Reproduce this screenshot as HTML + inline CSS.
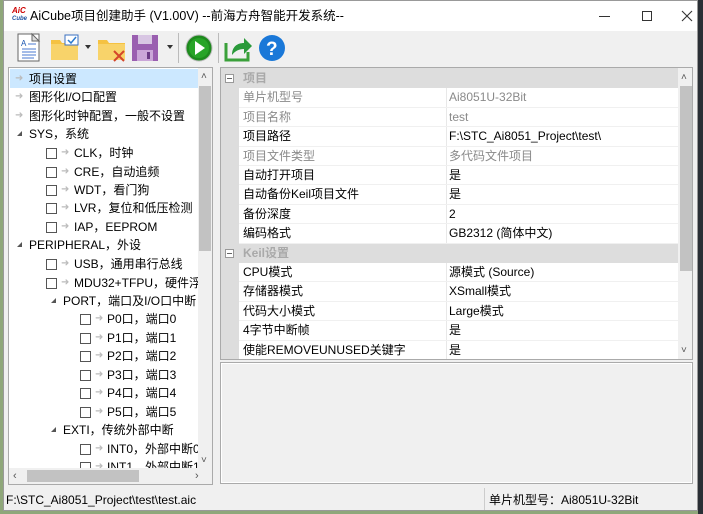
<!DOCTYPE html>
<html><head><meta charset="utf-8"><style>
*{margin:0;padding:0;box-sizing:border-box}
body{width:703px;height:514px;overflow:hidden;background:#8fa77a;font-family:"Liberation Sans","Noto Sans CJK SC",sans-serif;font-size:12px;color:#000;position:relative}
.a{position:absolute}
.win{left:3px;top:0;width:695px;height:511px;background:#f0f0f0;border:1px solid #999}
.t{position:absolute;white-space:nowrap;line-height:18px}
.cb{position:absolute;width:11px;height:11px;border:1px solid #555;background:#fff}
.ar{position:absolute;color:#bbb;font-size:10px;line-height:18px}
.tri{position:absolute;width:0;height:0;border-left:5px solid transparent;border-bottom:5px solid #555}
.row{position:absolute;left:18px;width:439px;height:19.4px;border-bottom:1px solid #f0f0f0;background:#fff}
.row span{position:absolute;top:1px;line-height:17px;white-space:nowrap}
.row .l{left:4px}.row .v{left:210px}
.row .d{position:absolute;left:207px;top:0;width:1px;height:100%;background:#e8e8e8}
.g{color:#8a8a8a}
.sec{position:absolute;left:0;width:457px;height:19.4px;background:#ddd}
.sec span{position:absolute;left:22px;top:1px;line-height:17px;color:#a9a9a9;font-weight:bold}
.sec i{position:absolute;left:4px;top:5px;width:9px;height:9px;border:1px solid #999;background:#fff}
.sec i:after{content:"";position:absolute;left:1px;top:3px;width:5px;height:1px;background:#666}
</style></head><body>
<div class="a" style="left:698px;top:0;width:5px;height:514px;background:#2a2f35"></div>
<div class="a win">
 <div class="a" style="left:0;top:0;width:693px;height:30px;background:#fff"></div>
 <div class="a" style="left:8px;top:6px;font-size:8px;line-height:7px;color:#c00;font-style:italic;font-weight:bold">AiC<br><span style="color:#1a4fa0;font-size:6px">Cube</span></div>
 <div class="t" style="left:26px;top:6px;font-size:12.5px">AiCube项目创建助手 (V1.00V) --前海方舟智能开发系统--</div>
 <div class="a" style="left:595px;top:15px;width:11px;height:1px;background:#333"></div>
 <div class="a" style="left:638px;top:10px;width:10px;height:10px;border:1px solid #333"></div>
 <svg class="a" style="left:677px;top:9px" width="12" height="12"><path d="M1 1L11 11M11 1L1 11" stroke="#333" stroke-width="1.1"/></svg>
 <!-- toolbar -->
 <svg class="a" style="left:0;top:30px" width="300" height="34">
  <rect x="14" y="3" width="21" height="27" fill="#fff" stroke="#666"/>
  <path d="M28 3 L35 10 L28 10 Z" fill="#ddd" stroke="#666"/>
  <text x="17" y="15" font-size="8" fill="#1a55b0" font-family="Liberation Sans">A</text>
  <path d="M18 18h14M18 21h14M18 24h14M18 27h12M24 13h8" stroke="#4a7ad0" stroke-width="1"/>
  <path d="M47 9h9l2 3h16v17h-27z" fill="#f5c242"/><rect x="47" y="13" width="27" height="16" fill="#f8d36a"/>
  <rect x="61" y="4" width="13" height="10" fill="#fff" stroke="#3a6fc0"/><path d="M64 9l3 3 5-6" stroke="#2a7ad0" fill="none" stroke-width="1.5"/>
  <path d="M81 14h6l-3 4z" fill="#333"/>
  <path d="M94 9h9l2 3h16v17h-27z" fill="#f5c242"/><rect x="94" y="13" width="27" height="16" fill="#f8d36a"/>
  <path d="M110 20l10 10M120 20l-10 10" stroke="#d4462a" stroke-width="2"/>
  <rect x="128" y="4" width="26" height="26" fill="#9a5fb0"/><rect x="134" y="4" width="14" height="9" fill="#d8c6e3"/><rect x="133" y="19" width="16" height="11" fill="#caa6d8"/><rect x="143" y="21" width="3" height="7" fill="#6a3a85"/>
  <path d="M163 14h6l-3 4z" fill="#333"/>
  <rect x="174" y="2" width="1" height="30" fill="#bbb"/>
  <circle cx="195" cy="17" r="13" fill="#1e8a1e" stroke="#bbb"/><circle cx="195" cy="17" r="10" fill="#28a428"/><path d="M191 10l10 7-10 7z" fill="#fff"/>
  <rect x="214" y="2" width="1" height="30" fill="#bbb"/>
  <path d="M222 12v17h22v-8" stroke="#3aa03a" stroke-width="3" fill="none"/>
  <path d="M228 24c0-8 5-12 12-12v-5l8 8-8 8v-5c-5 0-9 2-12 6z" fill="#2a9a3a"/>
  <circle cx="268" cy="17" r="13" fill="#1a78d8"/><text x="262" y="24" font-size="19" fill="#fff" font-weight="bold" font-family="Liberation Sans">?</text>
 </svg>
 <!-- tree -->
 <div class="a" style="left:4px;top:66px;width:205px;height:418px;background:#fff;border:1px solid #aaa;overflow:hidden">
  <div class="a" style="left:1px;top:1px;width:188px;height:19px;background:#cce8ff"></div>
  <div class="ar" style="left:6px;top:2px">➜</div><div class="t" style="left:20px;top:2px">项目设置</div>
  <div class="ar" style="left:6px;top:20px">➜</div><div class="t" style="left:20px;top:20px">图形化I/O口配置</div>
  <div class="ar" style="left:6px;top:39px">➜</div><div class="t" style="left:20px;top:39px">图形化时钟配置，一般不设置</div>
  <div class="tri" style="left:8px;top:63px"></div><div class="t" style="left:20px;top:57px">SYS，系统</div>
  <div class="cb" style="left:37px;top:80px"></div><div class="ar" style="left:52px;top:76px">➜</div><div class="t" style="left:65px;top:76px">CLK，时钟</div>
  <div class="cb" style="left:37px;top:99px"></div><div class="ar" style="left:52px;top:95px">➜</div><div class="t" style="left:65px;top:95px">CRE，自动追频</div>
  <div class="cb" style="left:37px;top:117px"></div><div class="ar" style="left:52px;top:113px">➜</div><div class="t" style="left:65px;top:113px">WDT，看门狗</div>
  <div class="cb" style="left:37px;top:135px"></div><div class="ar" style="left:52px;top:131px">➜</div><div class="t" style="left:65px;top:131px">LVR，复位和低压检测</div>
  <div class="cb" style="left:37px;top:154px"></div><div class="ar" style="left:52px;top:150px">➜</div><div class="t" style="left:65px;top:150px">IAP，EEPROM</div>
  <div class="tri" style="left:8px;top:174px"></div><div class="t" style="left:20px;top:168px">PERIPHERAL，外设</div>
  <div class="cb" style="left:37px;top:191px"></div><div class="ar" style="left:52px;top:187px">➜</div><div class="t" style="left:65px;top:187px">USB，通用串行总线</div>
  <div class="cb" style="left:37px;top:210px"></div><div class="ar" style="left:52px;top:206px">➜</div><div class="t" style="left:65px;top:206px">MDU32+TFPU，硬件浮点</div>
  <div class="tri" style="left:42px;top:230px"></div><div class="t" style="left:54px;top:224px">PORT，端口及I/O口中断</div>
  <div class="cb" style="left:71px;top:246px"></div><div class="ar" style="left:86px;top:242px">➜</div><div class="t" style="left:98px;top:242px">P0口，端口0</div>
  <div class="cb" style="left:71px;top:265px"></div><div class="ar" style="left:86px;top:261px">➜</div><div class="t" style="left:98px;top:261px">P1口，端口1</div>
  <div class="cb" style="left:71px;top:283px"></div><div class="ar" style="left:86px;top:279px">➜</div><div class="t" style="left:98px;top:279px">P2口，端口2</div>
  <div class="cb" style="left:71px;top:302px"></div><div class="ar" style="left:86px;top:298px">➜</div><div class="t" style="left:98px;top:298px">P3口，端口3</div>
  <div class="cb" style="left:71px;top:320px"></div><div class="ar" style="left:86px;top:316px">➜</div><div class="t" style="left:98px;top:316px">P4口，端口4</div>
  <div class="cb" style="left:71px;top:339px"></div><div class="ar" style="left:86px;top:335px">➜</div><div class="t" style="left:98px;top:335px">P5口，端口5</div>
  <div class="tri" style="left:42px;top:359px"></div><div class="t" style="left:54px;top:353px">EXTI，传统外部中断</div>
  <div class="cb" style="left:71px;top:376px"></div><div class="ar" style="left:86px;top:372px">➜</div><div class="t" style="left:98px;top:372px">INT0，外部中断0</div>
  <div class="cb" style="left:71px;top:394px"></div><div class="ar" style="left:86px;top:390px">➜</div><div class="t" style="left:98px;top:390px">INT1，外部中断1</div>
  <div class="a" style="left:189px;top:0;width:14px;height:400px;background:#f0f0f0"></div>
  <div class="a" style="left:190px;top:18px;width:12px;height:165px;background:#c2c2c2"></div>
  <div class="t" style="left:192px;top:0;font-size:10px;color:#555">˄</div>
  <div class="t" style="left:192px;top:384px;font-size:10px;color:#555">˅</div>
  <div class="a" style="left:0;top:400px;width:203px;height:16px;background:#f0f0f0"></div>
  <div class="a" style="left:18px;top:402px;width:112px;height:12px;background:#c2c2c2"></div>
  <div class="t" style="left:4px;top:399px;font-size:11px;color:#555">‹</div>
  <div class="t" style="left:186px;top:399px;font-size:11px;color:#555">›</div>
 </div>
 <!-- property grid -->
 <div class="a" style="left:216px;top:66px;width:473px;height:293px;background:#ddd;border:1px solid #aaa;overflow:hidden">
  <div class="sec" style="top:1px"><i></i><span>项目</span></div>
  <div class="row" style="top:20.4px"><span class="l g">单片机型号</span><div class="d"></div><span class="v g">Ai8051U-32Bit</span></div>
  <div class="row" style="top:39.8px"><span class="l g">项目名称</span><div class="d"></div><span class="v g">test</span></div>
  <div class="row" style="top:59.2px"><span class="l">项目路径</span><div class="d"></div><span class="v">F:\STC_Ai8051_Project\test\</span></div>
  <div class="row" style="top:78.6px"><span class="l g">项目文件类型</span><div class="d"></div><span class="v g">多代码文件项目</span></div>
  <div class="row" style="top:98px"><span class="l">自动打开项目</span><div class="d"></div><span class="v">是</span></div>
  <div class="row" style="top:117.4px"><span class="l">自动备份Keil项目文件</span><div class="d"></div><span class="v">是</span></div>
  <div class="row" style="top:136.8px"><span class="l">备份深度</span><div class="d"></div><span class="v">2</span></div>
  <div class="row" style="top:156.2px"><span class="l">编码格式</span><div class="d"></div><span class="v">GB2312 (简体中文)</span></div>
  <div class="sec" style="top:175.6px"><i></i><span>Keil设置</span></div>
  <div class="row" style="top:195px"><span class="l">CPU模式</span><div class="d"></div><span class="v">源模式 (Source)</span></div>
  <div class="row" style="top:214.4px"><span class="l">存储器模式</span><div class="d"></div><span class="v">XSmall模式</span></div>
  <div class="row" style="top:233.8px"><span class="l">代码大小模式</span><div class="d"></div><span class="v">Large模式</span></div>
  <div class="row" style="top:253.2px"><span class="l">4字节中断帧</span><div class="d"></div><span class="v">是</span></div>
  <div class="row" style="top:272.6px"><span class="l">使能REMOVEUNUSED关键字</span><div class="d"></div><span class="v">是</span></div>
  <div class="a" style="left:457px;top:0;width:15px;height:293px;background:#f0f0f0"></div>
  <div class="a" style="left:459px;top:18px;width:12px;height:185px;background:#c2c2c2"></div>
  <div class="t" style="left:460px;top:1px;font-size:10px;color:#555">˄</div>
  <div class="t" style="left:460px;top:274px;font-size:10px;color:#555">˅</div>
 </div>
 <div class="a" style="left:216px;top:361px;width:473px;height:122px;background:#f0f0f0;border:1px solid #aaa;box-shadow:inset 0 0 0 1px #fff"></div>
 <!-- status -->
 <div class="t" style="left:2px;top:490px">F:\STC_Ai8051_Project\test\test.aic</div>
 <div class="a" style="left:480px;top:487px;width:1px;height:22px;background:#ccc"></div>
 <div class="t" style="left:485px;top:490px">单片机型号：Ai8051U-32Bit</div>
</div>
</body></html>
